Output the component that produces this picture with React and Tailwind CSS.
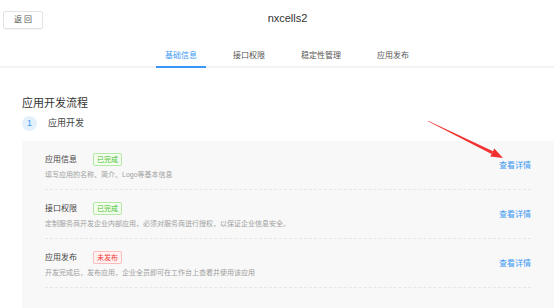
import React from 'react';

const TABS = ['基础信息', '接口权限', '稳定性管理', '应用发布'];

const STEPS = [
  { title: '应用信息', done: true, desc: '填写应用的名称、简介、Logo等基本信息' },
  { title: '接口权限', done: true, desc: '定制服务商开发企业内部应用，必须对服务商进行授权，以保证企业信息安全。' },
  { title: '应用发布', done: false, desc: '开发完成后，发布应用，企业全员即可在工作台上查看并使用该应用' },
];

function Badge({ done }) {
  if (done) {
    return (
      <span className="h-[13px] px-[3px] flex items-center border border-[#b5e8a6] bg-[#f3fdee] text-[#4cc22e] text-[7px] leading-none rounded-[2px]">
        已完成
      </span>
    );
  }
  return (
    <span className="h-[13px] px-[3px] flex items-center border border-[#ffbcbc] bg-[#fff2f2] text-[#f53a3a] text-[7px] leading-none rounded-[2px]">
      未发布
    </span>
  );
}

export default function App() {
  return (
    <div className="relative w-[554px] h-[308px] overflow-hidden bg-white font-['Liberation_Sans','Noto_Sans_CJK_SC',sans-serif]">
      {/* header */}
      <div className="flex items-start h-[45px]">
        <button className="ml-[3px] mt-[11px] w-[40px] h-[18px] border border-[#e3e3e3] rounded-[2px] shadow-[0_1px_1px_rgba(0,0,0,0.04)] text-[8px] leading-none text-[#555] flex items-center justify-center">
          返&nbsp;回
        </button>
        <div className="flex-1 pr-[22px] text-center mt-[11px] text-[11px] leading-[14px] text-[#333]">nxcells2</div>
      </div>

      {/* tabs */}
      <div className="flex justify-center pl-[20px] gap-[18px] h-[23px] border-b-2 border-[#f3f3f3]">
        {TABS.map((t, i) => (
          <div
            key={t}
            className={
              i === 0
                ? 'px-[9px] pt-[6px] text-[8px] leading-[10px] text-[#3a97f5] border-b-2 border-[#3a97f5] -mb-[2px]'
                : 'px-[9px] pt-[6px] text-[8px] leading-[10px] text-[#555]'
            }
          >
            {t}
          </div>
        ))}
      </div>

      {/* body */}
      <div className="pl-[22px] pt-[28px]">
        <h2 className="text-[11px] leading-[14px] text-[#333] font-normal">应用开发流程</h2>
        <div className="flex items-center mt-[5px] h-[16px]">
          <span className="w-[15px] h-[15px] rounded-full bg-[#e3f1fd] text-[#3a97f5] text-[9px] leading-none flex items-center justify-center">1</span>
          <span className="ml-[11px] text-[9px] leading-none text-[#444]">应用开发</span>
        </div>

        <div className="mt-[10px] bg-[#f8f8f8] px-[23px] h-[200px]">
          {STEPS.map((s) => (
            <div key={s.title} className="flex items-center justify-between h-[49px] border-b border-dashed border-[#e6e6e6]">
              <div className="flex flex-col self-start pt-[12px]">
                <div className="flex items-center h-[13px]">
                  <span className="w-[48px] text-[8px] leading-none text-[#444]">{s.title}</span>
                  <Badge done={s.done} />
                </div>
                <div className="mt-[4px] text-[7px] leading-[10px] text-[#a0a0a0]">{s.desc}</div>
              </div>
              <a className="text-[8px] leading-none text-[#3a97f5] mt-[2px]">查看详情</a>
            </div>
          ))}
        </div>
      </div>

      {/* annotation arrow */}
      <svg className="absolute left-0 top-0 pointer-events-none" width="554" height="308">
        <polygon points="428.1,120.7 427.9,121.3 491.6,154.0 493.0,151.3" fill="#f23030" />
        <polygon points="503,158 490.3,156.6 494.3,148.6" fill="#f23030" />
      </svg>
    </div>
  );
}
